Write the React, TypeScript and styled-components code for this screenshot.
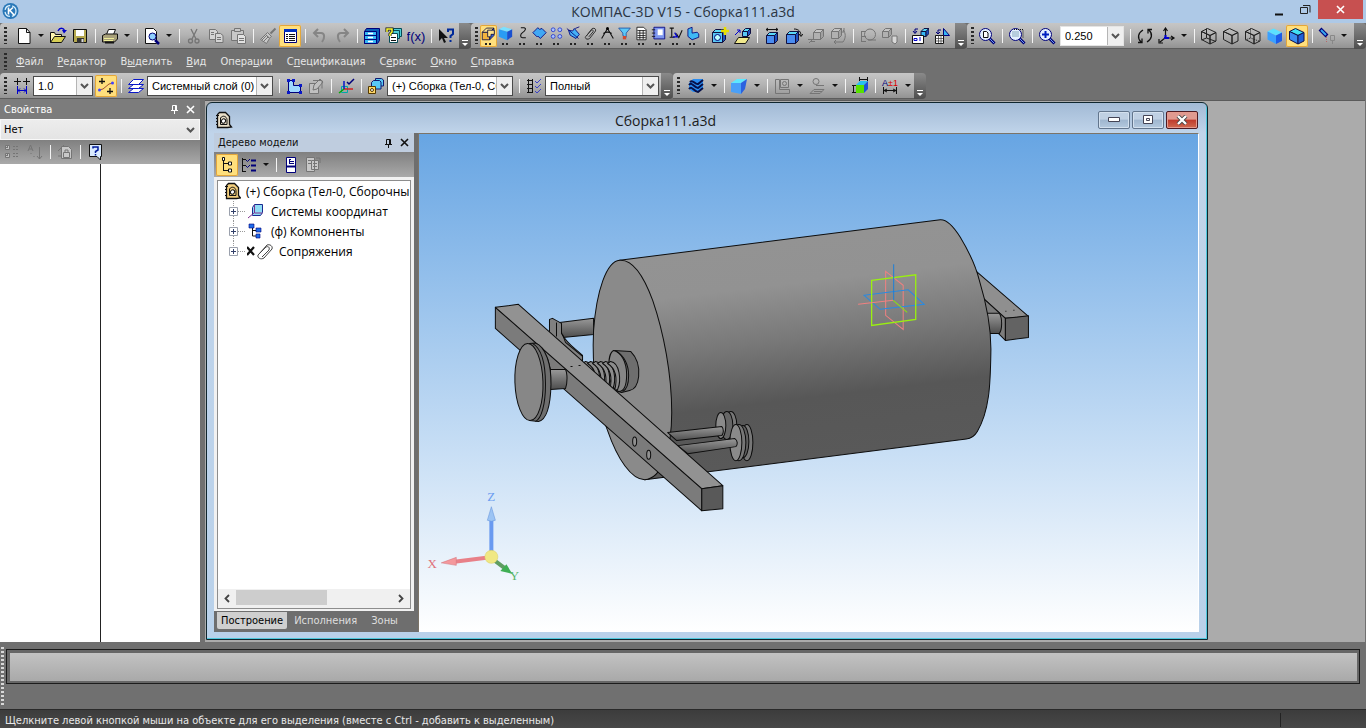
import React from 'react';
import styled, { createGlobalStyle, css } from 'styled-components';

const ui = `'DejaVu Sans Condensed', 'Noto Sans', sans-serif`;
const soft = `'Open Sans', 'Noto Sans', sans-serif`;
const field = `'Liberation Sans', 'Noto Sans', sans-serif`;

const Global = createGlobalStyle`
  * { box-sizing: border-box; }
  body { margin: 0; background: #707070; font-family: ${ui}; font-size: 11px; color: #000; }
  button { border: 0; padding: 0; margin: 0; background: none; font: inherit; color: inherit; }
  h1, h2 { margin: 0; font: inherit; }
`;

const App_ = styled.div`
  height: 100vh;
  display: flex;
  flex-direction: column;
  overflow: hidden;
`;

/* ---------- title bar ---------- */
const TitleBar = styled.header`
  height: 23px;
  flex: none;
  display: grid;
  grid-template-columns: 140px 1fr 140px;
  background: #aec9e7;
  color: #2b3542;
  font-family: ${soft};
  font-size: 14px;
  line-height: 23px;
  h1 { text-align: center; white-space: nowrap; }
  > svg { margin: 2px; }
`;
const WindowControls = styled.div`
  display: flex;
  justify-content: flex-end;
  align-items: flex-start;
  padding-right: 3px;
`;
const WinButton = styled.button<{ $close?: boolean }>`
  width: ${p => (p.$close ? 45 : 26)}px;
  height: 19px;
  display: grid;
  place-items: center;
  background: ${p => (p.$close ? '#c75050' : 'none')};
`;

/* ---------- toolbars ---------- */
const ToolRow = styled.div`
  display: flex;
  flex: none;
  height: 26px;
  background: #707070;
`;
const Bar = styled.div<{ $grow?: boolean }>`
  display: flex;
  align-items: center;
  flex: ${p => (p.$grow ? '1 0 auto' : 'none')};
  height: 26px;
  background: linear-gradient(#c6c6c6, #b4b4b4 45%, #939393);
  border-bottom: 1px solid #5c5c5c;
  border-top-left-radius: 4px;
`;
const Grip = styled.span<{ $w: number }>`
  width: ${p => p.$w}px;
  flex: none;
  height: 17px;
  display: flex;
  padding-left: 4px;
  &::before {
    content: '';
    width: 3px;
    background: repeating-linear-gradient(#2a2a2a 0 2px, transparent 2px 4px);
  }
`;
const Tool = styled.button<{ $on?: boolean; $w?: number }>`
  width: ${p => p.$w || 22}px;
  height: 22px;
  flex: none;
  display: grid;
  place-items: center;
  border-radius: 2px;
  ${p => p.$on && css`
    background: #ffdf7c;
    box-shadow: inset 0 0 0 1px #e3a63a;
  `}
`;
const Sep = styled.span`
  width: 8px;
  flex: none;
  height: 14px;
  display: flex;
  justify-content: center;
  &::before { content: ''; width: 1px; background: #f4f4f4; }
`;
const Caret = styled.button<{ $w: number }>`
  width: ${p => p.$w}px;
  height: 20px;
  flex: none;
  display: grid;
  place-items: center;
  &::before {
    content: '';
    border: 3px solid transparent;
    border-top-color: #111;
    border-bottom: 0;
  }
`;
const More = styled.button`
  width: 12px;
  flex: none;
  height: 26px;
  background: linear-gradient(#8a8a8a, #4e4e4e);
  display: grid;
  place-items: end center;
  padding-bottom: 2px;
  border-radius: 0 4px 4px 0;
`;
const Field = styled.span<{ $w: number; $flat?: boolean }>`
  width: ${p => p.$w}px;
  height: 20px;
  flex: none;
  display: grid;
  grid-template-columns: minmax(0, 1fr) 16px;
  background: #fff;
  border: 1px solid ${p => (p.$flat ? '#e4e4e4' : '#4a4a4a')};
  select {
    grid-area: 1 / 1 / 2 / 3;
    appearance: none;
    border: 0;
    outline: 0;
    background: none;
    min-width: 0;
    height: 18px;
    padding: 0 16px 0 4px;
    font: 11px ${field};
    color: #000;
  }
  > span {
    grid-area: 1 / 2;
    display: grid;
    place-items: center;
    background: #efefef;
    border-left: 1px solid #b5b5b5;
    pointer-events: none;
    z-index: 1;
  }
`;
const Gap = styled.span`
  width: 2px;
  flex: none;
`;
const MenuBar = styled.nav`
  display: flex;
  flex: none;
  height: 24px;
  align-items: center;
  background: #707070;
  color: #e6e6e6;
`;
const MenuItem = styled.button`
  padding: 0 7px;
  white-space: nowrap;
`;

/* ---------- workspace ---------- */
const Main = styled.main`
  flex: 1;
  min-height: 0;
  display: flex;
  background: #707070;
`;
const Properties = styled.aside`
  width: 200px;
  flex: none;
  display: flex;
  flex-direction: column;
  background: #fff;
`;
const PaneTitle = styled.div<{ $light?: boolean }>`
  height: ${p => (p.$light ? 19 : 20)}px;
  flex: none;
  display: flex;
  align-items: center;
  padding: 0 2px 0 4px;
  background: ${p => (p.$light ? '#bfcddf' : '#7c7c7c')};
  color: ${p => (p.$light ? '#111' : '#fff')};
  h2 { flex: 1; }
  button { width: 16px; height: 16px; display: grid; place-items: center; }
`;
const ObjectPicker = styled.label`
  display: grid;
  flex: none;
  height: 21px;
  background: linear-gradient(#ededed, #e4e4e4);
  border: 1px solid #f8f8f8;
  align-items: center;
  select {
    grid-area: 1 / 1;
    appearance: none;
    border: 0;
    background: none;
    font: 11px ${ui};
    padding: 0 3px;
    height: 19px;
  }
  svg { grid-area: 1 / 1; justify-self: end; margin-right: 4px; pointer-events: none; }
`;
const PaneTools = styled.div<{ $h: number }>`
  height: ${p => p.$h}px;
  flex: none;
  display: flex;
  align-items: center;
  background: linear-gradient(#808080, #a9a9a9);
`;
const PropertyGrid = styled.div`
  flex: 1;
  display: grid;
  grid-template-columns: 101px 1fr;
  div:first-child { border-right: 1px solid #222; }
  div { min-width: 0; }
`;
const Desktop = styled.section`
  flex: 1;
  min-width: 0;
  display: flex;
  margin: 1px 1px 0 5px;
  padding: 1px 157px 2px 1px;
  background: #ababab;
  border: solid #5a5a5a;
  border-width: 1px 0 0 0;
`;
const DocWindow = styled.article`
  flex: 1;
  min-width: 0;
  display: flex;
  flex-direction: column;
  padding: 0 8px 7px 7px;
  border: 1px solid #10262e;
  border-radius: 6px 6px 0 0;
  background: linear-gradient(#a2bad5, #c0d4ea 30px, #b9d1ea);
  box-shadow: inset -1px -1px 0 #4fc8dd;
`;
const DocTitle = styled.div`
  height: 30px;
  flex: none;
  display: grid;
  grid-template-columns: 100px 1fr 182px;
  align-items: center;
  padding: 4px 1px 0 1px;
  color: #1b1b1b;
  font-family: ${soft};
  font-size: 14px;
  h2 { text-align: center; }
`;
const DocButtons = styled.div`
  display: flex;
  justify-content: flex-end;
  gap: 2px;
`;
const DocButton = styled.button<{ $close?: boolean }>`
  width: 32px;
  height: 18px;
  flex: none;
  display: grid;
  place-items: center;
  border: 1px solid ${p => (p.$close ? '#4d1a22' : '#62758c')};
  border-radius: 2px;
  box-shadow: inset 0 0 0 1px ${p => (p.$close ? '#e49a8e' : '#d3e0ee')};
  background: ${p => (p.$close
    ? 'linear-gradient(#e09a90 45%, #bf3a2b 50%, #cf6a50)'
    : 'linear-gradient(#bfd0e3 45%, #9fb6cf 50%, #b4c9de)')};
`;
const DocBody = styled.div`
  flex: 1;
  min-height: 0;
  display: flex;
  background: #6e6e6e;
`;
const TreePane = styled.aside`
  width: 200px;
  flex: none;
  display: flex;
  flex-direction: column;
`;
const TreeFrame = styled.div`
  flex: 1;
  min-height: 0;
  display: flex;
  background: #f1f1f1;
  padding: 3px 3px 2px 3px;
`;
const TreeBox = styled.div`
  flex: 1;
  min-width: 0;
  display: flex;
  flex-direction: column;
  border: 1px solid #8d8d8d;
  background: #fff;
`;
const Tree = styled.ul`
  flex: 1;
  list-style: none;
  margin: 0;
  padding: 0;
  overflow: hidden;
  font-family: ${soft};
  font-size: 12px;
`;
const Node = styled.li<{ $gap: number }>`
  height: 20px;
  display: flex;
  align-items: center;
  white-space: nowrap;
  svg { flex: none; margin-right: ${p => p.$gap}px; }
`;
const HScroll = styled.div`
  height: 19px;
  flex: none;
  display: grid;
  grid-template-columns: 18px 91px 1fr 18px;
  background: #f0f0f0;
  button { display: grid; place-items: center; }
  span { background: #cdcdcd; margin: 1px 0 3px; }
  button:last-child { grid-column: 4; }
`;
const Tabs = styled.div`
  height: 21px;
  flex: none;
  display: flex;
  padding: 1px 3px 3px;
  color: #dedede;
`;
const Tab = styled.button<{ $on?: boolean }>`
  padding: 0 ${p => (p.$on ? 4 : 7)}px;
  ${p => p.$on && css`
    background: #cfcfcf;
    color: #000;
    border-radius: 0 0 2px 2px;
  `}
`;
const Viewport = styled.div`
  flex: 1;
  min-width: 0;
  margin-left: 4px;
  border: solid #7c7468;
  border-width: 1px 1px 0 1px;
  border-right-color: #fff;
  background: linear-gradient(#67a5e3, #fff);
  svg { display: block; width: 100%; height: 100%; }
`;

/* ---------- bottom ---------- */
const Dock = styled.section`
  height: 67px;
  flex: none;
  display: flex;
  gap: 2px;
  background: #707070;
  padding: 5px 6px 4px 1px;
  &::before {
    content: '';
    width: 3px;
    background: repeating-linear-gradient(#d8d8d8 0 2px, transparent 2px 4px);
  }
`;
const MessageBox = styled.div`
  flex: 1;
  height: 35px;
  margin-top: 2px;
  border: 1px solid #1c1c1c;
  padding: 3px 2px 2px 3px;
  background: #666;
  div { height: 100%; background: linear-gradient(#c2c2c2, #a9a9a9); }
`;
const Status = styled.footer`
  height: 19px;
  flex: none;
  display: flex;
  align-items: center;
  padding: 2px 5px 0;
  background: linear-gradient(#3c3c3c, #484848);
  border-top: 1px solid #2a2a2a;
  color: #e8e8e8;
  white-space: nowrap;
`;
const StatusMark = styled.span`
  margin-left: auto;
  width: 81px;
  height: 14px;
  border-left: 1px solid #222;
`;

/* ---------- icons ---------- */
const navy = '#00007a';
const dim = '#757575';

type CubeProps = { x: number; y: number; s: number; d?: number; f?: string; t?: string; r?: string; k?: string };
const Cube = ({ x, y, s, d = 4, f = '#4a8cf0', t = '#59d8f8', r = '#1e50c0', k = '#101040' }: CubeProps) => (
  <g stroke={k} strokeLinejoin="round">
    <path fill={f} d={`M${x} ${y}h${s}v${s}h${-s}z`} />
    <path fill={t} d={`M${x} ${y}l${d} ${-d}h${s}l${-d} ${d}z`} />
    <path fill={r} d={`M${x + s} ${y}l${d} ${-d}v${s}l${-d} ${d}z`} />
  </g>
);
type WireProps = { k: string; front?: string; right?: string; top?: string; hidden?: 'solid' | 'faint' };
const IsoBox = ({ k, front = 'none', right = 'none', top = 'none', hidden }: WireProps) => (
  <g stroke={k} strokeLinejoin="round">
    {hidden && (
      <path fill="none" strokeDasharray={hidden === 'faint' ? '1 1' : undefined} d="M6.500 1.500v9.500L1.500 13M6.500 11l9.500 3.500" />
    )}
    <path fill={top} d="M1.500 4.500l6-3 8.500 4-6 3z" />
    <path fill={front} d="M1.500 4.500l8.500 4v8.500l-8.500-4.500z" />
    <path fill={right} d="M10 8.500l6-3v8.500l-6 3z" />
  </g>
);
const Lens = ({ children }: { children?: React.ReactNode }) => (
  <>
    <path d="M11 11l5.500 5.500" stroke={navy} strokeWidth="3" />
    <path d="M12 12l4 4" stroke="#6fa0f0" />
    <circle cx="7.500" cy="7.500" r="6" fill="#e4f0ff" stroke={navy} />
    {children}
  </>
);
const Reel = ({ fill }: { fill: string }) => (
  <>
    <path d="M2.500 15.500v-12l2-2h6l4 4v8l2 2.500-4 .5h-10z" fill={fill} stroke="#111" strokeWidth="1.300" />
    <path d="M1 4.500h3M1 7.500h2M1 10.500h2M1 13.500h2" stroke="#111" />
    <path d="M5.500 13.500V7c2-3 6-2 6.500 1.500v5z" fill="none" stroke="#111" />
    <ellipse cx="8.500" cy="10" rx="2" ry="2.300" fill="#fff" stroke="#111" transform="rotate(30 8.500 10)" />
  </>
);

const pics: Record<string, React.ReactNode> = {
  new: <><path d="M3.500 1.500h8l3.500 4v11H3.500z" fill="#fff" stroke="#111" /><path d="M11.500 1.500v4H15" fill="none" stroke="#111" /></>,
  open: <><path d="M1.500 15.500v-10h4l1 2h6v3" fill="#fff6b0" stroke="#111" /><path d="M1.500 15.500l4-6h11l-4 6z" fill="#d8cf55" stroke="#111" /><path d="M9 4c2-4 6-3 6.500 0" fill="none" stroke="#00c" strokeWidth="1.500" /><path d="M13 3h5l-3 3.500z" fill="#00c" /></>,
  save: <><path d="M2.500 2.500h13v13h-12l-1-1z" fill="#b5a84e" stroke="#111" /><path d="M5 3h8v6H5z" fill="#fff" /><path d="M6 11h7v5H6z" fill="#333" /><path d="M10.500 12h2v3h-2z" fill="#ddd" /></>,
  print: <><path d="M5.500 7.500l2-5h7l-2 5" fill="#fff" stroke="#111" /><path d="M1.500 8.500l3-1.500h12v5l-3 3h-12z" fill="#a8a07a" stroke="#111" /><path d="M3 11.500h10M3 13.500h9" stroke="#ee9" /><path d="M4 15.500h9" stroke="#111" strokeWidth="2" /></>,
  preview: <><path d="M2.500 1.500h8l3 3v12h-11z" fill="#fff" stroke="#111" /><path d="M12 13l4 4" stroke={navy} strokeWidth="2.500" /><circle cx="9.500" cy="9.500" r="3.500" fill="#8fd0ff" stroke={navy} /></>,
  cut: <g fill="none" stroke={dim} strokeWidth="1.300"><path d="M6 2l5 10M12 2L7 12" /><circle cx="5.500" cy="14" r="2" /><circle cx="12" cy="14" r="2" /></g>,
  copy: <g fill="#d4d4d4" stroke={dim}><path d="M2.500 2.500h6l2 2v8h-8z" /><path d="M8.500 6.500h5l2.500 2v7H8.500z" /><path d="M4 5.500h3M4 7.500h3M10 10.500h4M10 12.500h4" /></g>,
  paste: <g fill="#c8c8c8" stroke={dim}><path d="M2.500 3.500h12v10h-12z" /><path d="M5.500 1.500h6v3h-6z" /><path d="M8.500 7.500h6l2 2v7h-8z" fill="#e2e2e2" /><path d="M10 11.500h5M10 13.500h5" /></g>,
  brush: <g stroke={dim} fill="#c9c9c9"><path d="M16.500 1.500l-5 5" strokeWidth="2" /><path d="M8.500 5.500l4 4-2 1.500-4-3.500z" /><path d="M6.500 7.500l4 4-3 5-6-4z" /><path d="M3 13l4-4M5 14l4-4" /></g>,
  list: <><path d="M3.500 2.500h12v13h-12z" fill="#fff" stroke={navy} /><path d="M3 3.500h13" stroke="#0030c0" strokeWidth="3" /><path d="M5 7.500h2M5 9.500h2M5 11.500h2M5 13.500h2M8 7.500h6M8 9.500h6M8 11.500h6M8 13.500h6" stroke="#111" /></>,
  undo: <path d="M4 6h6c4 0 4 5 1 9M7 2L3 6l4 4" fill="none" stroke="#858585" strokeWidth="2" />,
  redo: <path d="M14 6H8c-4 0-4 5-1 9M11 2l4 4-4 4" fill="none" stroke="#858585" strokeWidth="2" />,
  cabinet: <g stroke={navy} fill="#35b8f4"><path d="M1.500 4.500l2-3h13v12l-2 3h-13z" fill="#0a60b8" /><path d="M1.500 4.500h12v4h-12zM1.500 8.500h12v4h-12zM1.500 12.500h12v4h-12z" /><path d="M5 6.500h5M5 10.500h5M5 14.500h5" stroke="#fff" strokeWidth="1.500" /></g>,
  layersq: <><g fill="#4fd0d8" stroke="#054a55"><path d="M8.500 1.500h8v8h-8z" /><path d="M6.500 3.500h8v8h-8z" /><path d="M4.500 6.500h8v9h-8z" fill="#fff" /></g><path d="M2 5V2h5v3L5 7v2" fill="none" stroke="#111" strokeWidth="3" /><path d="M2 5V2h5v3L5 7v2" fill="none" stroke="#ff3" strokeWidth="1.500" /><path d="M6 10.500h5M6 13.500h5" stroke="#111" /></>,
  fx: <text x="9" y="14" textAnchor="middle" fontFamily="Liberation Sans, sans-serif" fontSize="13" fill={navy}>f(x)</text>,
  help: <><path d="M2 2v12l3-3 2 5 2-1-2-4h4z" fill="#111" /><path d="M11 5V2.500h5V7l-2.500 2v2M13.500 13v2" fill="none" stroke="#002a9a" strokeWidth="2" /></>,
  asm: <><Cube x={1.5} y={7.5} s={9} d={5} f="#f3b23c" t="#fbe08a" r="#3a66d8" /><path d="M8 5h8v5h-4v3H8z" fill="#fbe08a" stroke="#101040" /></>,
  solid: <g><path d="M1 4l6-3 10 3-6 3z" fill="#7be0ff" /><path d="M1 4l10 3v10L1 13z" fill="#2a9cf4" /><path d="M11 7l6-3v9l-6 4z" fill="#1a50d0" /></g>,
  curve: <path d="M7 2h4c3 1 1 4-2 6s-3 6 0 6h4" fill="none" stroke="#111" strokeWidth="1.300" />,
  surf: <path d="M1 8l6-6 2 2 3-1 5 5-7 7-3-3-1 1z" fill="#41a8f4" stroke={navy} />,
  grid4: <g fill="#a9c4ff" stroke="#2536c8"><circle cx="5" cy="4.500" r="2.300" /><circle cx="13" cy="4.500" r="2.300" /><circle cx="5" cy="12.500" r="2.300" /><circle cx="13" cy="12.500" r="2.300" /></g>,
  array: <><path d="M3 5l5 1 2-3 6 7-4 5-7-4z" fill="#45b0f5" stroke={navy} /><path d="M1 3l14 12M11 3l5-2" stroke={navy} /></>,
  clip: <path d="M4 12l7-9c3-1 5 1 4 3l-7 9c-3 2-6 0-5-2l7-8c1-1 3 0 2 2l-5 6" fill="none" stroke="#333" strokeWidth="1.200" />,
  compass: <><path d="M9 3L2 15M9 3l7 12M4 9c3-2 7-2 10 0" fill="none" stroke="#111" strokeWidth="1.300" /><circle cx="9" cy="3" r="1.800" /></>,
  filter: <><path d="M2 2.500h14l-5 6v5l-4-2v-3z" fill="#5cc8f8" stroke="#2050a0" /><path d="M7 12h4v4H7z" fill="#d04a30" /></>,
  doc: <><path d="M3.500 1.500h8l3 3v12h-11z" fill="#fff" stroke="#111" /><path d="M4 5.500h10M4 8.500h10M4 11.500h10M4 14h10M7 5v11M11 5v11" stroke="#111" /></>,
  book: <><path d="M3.500 1.500h13v14h-13z" fill="#7d96f0" stroke={navy} /><path d="M8 4h6v7H8z" fill="#fff" /><path d="M1 4.500h4M1 8.500h4M1 12.500h4" stroke="#111" /></>,
  rough: <><path d="M2 2.500h5M4.500 3v10M2 13.500h6M10 9l3 5 4-9" fill="none" stroke="#111" strokeWidth="1.300" /><path d="M8 8l3 5M6 13h6" stroke="#00c" strokeWidth="1.500" /></>,
  pipe: <path d="M3.500 3.500l5-2v7l6-1 2 2v4l-8 3-5-4z" fill="#3fb8f4" stroke={navy} />,
  add: <><Cube x={1.5} y={5.5} s={10} d={3} f="#59c8f6" /><circle cx="6.500" cy="10.500" r="3" fill="#bff" stroke={navy} /><path d="M14 0v8M10 4h8" stroke="#e8e000" strokeWidth="2.500" /></>,
  fromfile: <><Cube x={9.5} y={4.5} s={5} d={3} f="#59c8f6" /><path d="M1.500 16.500l4-6h11l-4 6z" fill="#f0e88c" stroke="#111" /><path d="M2 8l5-5M4 3h3v3" stroke="#00c" fill="none" /></>,
  width: <><path d="M3 2.500h12M5 1L3 2.500 5 4M13 1l2 1.500L13 4" stroke="#111" fill="none" /><Cube x={3.5} y={8.5} s={8} d={3} /></>,
  rotate: <><Cube x={1.5} y={7.500} s={9} d={3} /><path d="M9 2c5 0 7 3 7 7M14 7l2 2.500L18 7" fill="none" stroke="#111" /></>,
  fixd: <><Cube x={6.5} y={5.5} s={7} d={3} f="#b0b0b0" t="#c4c4c4" r="#a0a0a0" k={dim} /><path d="M6 12l-4 4M1 12.500h8M3 14.500h5" stroke={dim} /></>,
  turnd: <><Cube x={2.5} y={4.5} s={7} d={3} f="#b0b0b0" t="#c4c4c4" r="#a0a0a0" k={dim} /><path d="M14 3c3 3 3 8 0 12H5M15 1v4h-3M7 13l-2 2 2 2" fill="none" stroke={dim} /></>,
  mated: <g fill="none" stroke={dim}><path d="M2 4.500h5M2 9.500h5M2 14.500h5M2.500 4v11" /><circle cx="11" cy="7.500" r="5.500" /><path d="M9 13h8" /></g>,
  cubesd: <><Cube x={1.500} y={4.500} s={6} d={3} f="#b0b0b0" t="#c4c4c4" r="#a0a0a0" k={dim} /><path d="M11 9h5v6l-2 2-3-2z" fill="#d8d8d8" stroke={dim} /></>,
  todraw: <><Cube x={10} y={4.500} s={5} d={3} f="#35b8f4" /><path d="M1.500 8.500h11v8h-11z" fill="#fff" stroke="#111" /><path d="M3 11.500h3v2H3zM9 10v4" fill="none" stroke="#00c" /><path d="M7 2H4v4M2 4l2 2.500L6 4" fill="none" stroke={navy} /></>,
  totable: <><path d="M10.500 8.500v-7l6 7z" fill="#35b8f4" stroke={navy} /><path d="M2.500 8.500h8v8h-8z" fill="#fff" stroke="#111" /><path d="M5.500 8v8M8 8v8M2 11.500h8M2 14h8" stroke="#333" strokeWidth=".7" /><path d="M8 3H5v4M3 5l2 2L7 5" fill="none" stroke={navy} /></>,
  zoompage: <Lens><path d="M5.500 4.500h3l1.500 1.500v4.500H5.500z" fill="#fff" stroke="#111" /></Lens>,
  zoomarea: <Lens><path d="M6 2.500h9v9" fill="none" stroke="#111" strokeDasharray="1 1" /><path d="M4 5h7M4 7h7M4 9h7" stroke="#8ab" /></Lens>,
  zoomin: <Lens><path d="M7.500 4v7M4 7.500h7" stroke="#0020c0" strokeWidth="2" /></Lens>,
  spin: <path d="M5 15C1 11 2 6 7 3M13 3c4 4 3 9-2 12M2 15.500h4v-4M16 2.500h-4v4" fill="none" stroke="#111" strokeWidth="1.300" />,
  axes: <g fill="none" strokeWidth="1.200"><path d="M7.500 2v9M5.500 4l2-3 2 3M7 11l-5 4M1 12v4h4" stroke="#111" /><path d="M8 11h8M13 9l3 2-3 2" stroke="#111" /><path d="M6 11h5M7.500 8v4" stroke="#00c" strokeWidth="2" /></g>,
  wire: <IsoBox k="#222" hidden="solid" />,
  box: <IsoBox k="#222" />,
  boxhid: <IsoBox k="#222" hidden="faint" />,
  shade: <IsoBox k="none" front="#3aa0ff" top="#5ce0ff" right="#1c5ce8" />,
  shadeline: <IsoBox k="#10104a" front="#3a8cf0" top="#40e0f4" right="#2060d8" />,
  lamp: <><path d="M2 2l7 7" stroke={navy} strokeWidth="4" /><path d="M3 3l5 5" stroke="#38a8f0" strokeWidth="2" /><path d="M8.500 10v6" stroke="#b66" strokeDasharray="1 1" /><path d="M12.500 8.500h4v5h-4zM14.500 14v3" fill="none" stroke="#888" /></>,
  dist: <><path d="M4.500 1v7M1 4.500h7M13.500 1v7M10 4.500h7" stroke="#111" /><path d="M4.500 9v8M13.500 9v8M5 13.500h8M7 11.500l-2 2 2 2M11 11.500l2 2-2 2" fill="none" stroke="#00c" /></>,
  snap: <><path d="M5 1v6M2 4.500h6M13 11v6M10 14.500h6" stroke="#111" strokeWidth="1.300" /><path d="M2 13l4-1 6-5 4-1" fill="none" stroke="#a05030" /><circle cx="2.500" cy="13" r="1.500" fill="#44f" /><circle cx="15.500" cy="6" r="1.500" fill="#44f" /></>,
  layers: <g fill="#fff" stroke="#0a18c8"><path d="M1.500 15.500l5-4h10l-5 4z" /><path d="M1.500 11.500l5-4h10l-5 4z" /><path d="M1.500 7.500l5-5h10l-5 5z" /></g>,
  sketch: <><path d="M3.500 3.500h5v5h7v7h-12z" fill="#9fd8ff" stroke={navy} /><g fill="#0a18c8"><path d="M2 2h3v3H2zM7 2h3v3H7zM14 7h3v3h-3zM14 14h3v3h-3zM2 14h3v3H2z" /></g></>,
  sketchd: <g fill="#c0c0c0" stroke={dim}><path d="M2.500 6.500h9v10h-9z" /><path d="M6 13l1-5 6-6 3 3-6 7z" /><path d="M6 3.500h9v8" fill="none" /></g>,
  ucs: <><path d="M4.500 9.500h6v6h-6z" fill="none" stroke="#00a8a8" /><path d="M7 12h9" stroke="#d02020" strokeWidth="1.500" /><path d="M7 12V4" stroke="#0a18c8" strokeWidth="1.500" /><path d="M7 12l-5 4" stroke="#0a0" strokeWidth="1.500" /><path d="M10 5l2 2 5-5" fill="none" stroke={navy} strokeWidth="1.500" /></>,
  comps: <><path d="M8.500 1.500h6l2 1.500v6h-8z" fill="#59c8f6" stroke="#101a70" /><path d="M4.500 5.500l2-2h6l1.500 1.500v7h-9.500z" fill="#59c8f6" stroke="#101a70" /><path d="M1.500 9.500h7v7h-7z" fill="#ffd768" stroke="#553a00" /><circle cx="5" cy="13" r="1.500" fill="#fff" stroke="#553a00" /></>,
  checks: <><path d="M3.500 2v14M7.500 2v14M2 3.500h6M2 7.500h6M2 11.500h6M2 15.500h6" stroke="#111" /><path d="M10 4l2 2 4-4M10 9l2 2 4-4M10 14l2 2 4-4" fill="none" stroke="#3a40c8" /></>,
  section: <><path d="M2 6l4-4h10v9l-4 4H6l-4-3z" fill="#2a8cf0" /><path d="M2 12c3-4 5 3 9 3l5-4M2 8c3-4 5 3 9 3l5-4M3 5c3-3 5 3 8 2l5-4" stroke="#071048" strokeWidth="2" fill="none" /></>,
  prism: <g><path d="M1 6l6-4h10l-6 4z" fill="#5ee8ff" /><path d="M1 6h10v11L1 15z" fill="#4aa0f8" /><path d="M11 6l6-4-2 10-4 5z" fill="#2a62e0" /></g>,
  refd: <g fill="none" stroke={dim}><path d="M2.500 2.500h4v10h10v4h-14z" /><path d="M7.500 2.500h8v8h-8z" /><circle cx="11.500" cy="6.500" r="2" /></g>,
  proj: <g fill="none" stroke={dim}><circle cx="8" cy="4.500" r="3" /><path d="M8 8.500h8M2 16.500l4-4h10l-4 4zM6 14.500h8" /></g>,
  measure: <><Cube x={5} y={8} s={8} d={4} f="#58e000" t="#28c0f0" r="#1c50d8" k="none" /><path d="M1 8.500h4M1 15.500h4M2.500 8v8M8.500 0v4M16.500 0v4M8 2.500h8" stroke="#111" /></>,
  tol: <><text x="1" y="9" fontFamily="Liberation Sans, sans-serif" fontSize="9" fill={navy}>A</text><text x="7" y="9" fontFamily="Liberation Sans, sans-serif" fontSize="9" fill="#d00">±1</text><path d="M2.500 10v7M15.500 10v7M3 13.500h12M6 12l-3 1.500L6 15M12 12l3 1.500-3 1.500" fill="none" stroke="#111" /></>,
  groupd: <g stroke={dim} fill="#c4c4c4"><path d="M1.500 2.500h4v4h-4zM1.500 10.500h4v4h-4z" /><path d="M3.500 3v3M2 4.500h3M3.500 11v3M2 12.500h3M9 3.500h6M9 6.500h6M9 10.500h6M9 13.500h6" strokeDasharray="2 1" /></g>,
  sortd: <g stroke={dim} fill="none"><path d="M2 8l2.500-6L7 8M3 6h3M5 10v1M8 13v1M13.500 4v12M11 13l2.500 3 2.500-3" /></g>,
  lockd: <g stroke={dim} fill="#c8c8c8"><path d="M5.500 3.500h7l3 3v9h-10z" /><path d="M2 8l6-6M2 13h3M7.500 9.500h6v5h-6zM9 9V7h3v2" /></g>,
  hint: <><path d="M3.500 1.500h12v12h-1v3.500l-3.500-3.500H3.500z" fill="#d9eaff" stroke="#111" /><path d="M7 5.500V4h5v3L9.500 8.500V10M9.500 11v1.500" fill="none" stroke="#001a9a" strokeWidth="1.500" /></>,
  treeon: <g fill="none" stroke="#111"><path d="M5.500 4v11M5.500 7.500h5M5.500 14.500h5" /><path d="M4.500 1.500h2v3h-2zM10.500 6h3v3h-3zM10.500 13h3v3h-3z" fill="#fff" /></g>,
  treelist: <><path d="M2.500 2v14M2 3.500h4M2 9.500h4M2 15.500h4" stroke="#111" /><path d="M6 4l1.500 1.500L10 3M6 10l1.500 1.500L10 9" fill="none" stroke={navy} /><path d="M11 4.500h5M11 9.500h5M11 14.500h5" stroke={navy} strokeWidth="2" /></>,
  treedoc: <><path d="M4.500 1.500h9v15h-9z" fill="#fff" stroke={navy} /><path d="M5 10.500h8" stroke={navy} strokeWidth="2" /><path d="M7 3.500h2M7.500 4v4M8 5.500h4M8 7.500h4" stroke={navy} /></>,
  treedocd: <g stroke={dim} fill="#c8c8c8"><path d="M2.500 1.500h8v14h-8zM7.500 4.500h7v9h-7z" /><path d="M4 4.500h3M4 7.500h3M9 7.500h4M9 10.500h4M12 2h4v5" fill="none" /></g>,
  docicon: <Reel fill="#e9dfc8" />,
};

const Pic = ({ n }: { n: string }) => (
  <svg width="18" height="18" viewBox="0 0 18 18" aria-hidden="true">{pics[n]}</svg>
);
const Chevron = () => (
  <svg width="9" height="6" viewBox="0 0 9 6" aria-hidden="true"><path d="M1 1l3.500 3.500L8 1" fill="none" stroke="#555" strokeWidth="2" /></svg>
);
const Dots = ({ n }: { n: string }) => (
  <svg width="17" height="22" viewBox="0 0 17 22" aria-hidden="true">
    <svg x="1" y="1" width="15" height="15" viewBox="0 0 18 18">{pics[n]}</svg>
    <path d="M5 18h2v2H5zM9 18h2v2H9z" fill="#222" />
  </svg>
);
const Overflow = () => (
  <More aria-label="Параметры панели">
    <svg width="8" height="8" viewBox="0 0 8 8"><path d="M1 1.500h6" stroke="#fff" /><path d="M1 4h6L4 7z" fill="#fff" /></svg>
  </More>
);
const Combo = ({ w, value, label, flat }: { w: number; value: string; label: string; flat?: boolean }) => (
  <Field $w={w} $flat={flat}>
    <select aria-label={label}><option>{value}</option></select>
    <span><Chevron /></span>
  </Field>
);

/* "|" is a separator, "v" a drop-down arrow, "*" marks a pressed tool */
const Tools = ({ items, caret = 12 }: { items: string; caret?: number }) => (
  <>
    {items.split(' ').map((it, i) => {
      if (it === '|') return <Sep key={i} />;
      if (it === 'v') return <Caret key={i} $w={caret} aria-label="Ещё" />;
      const on = it.endsWith('*');
      const name = on ? it.slice(0, -1) : it;
      return <Tool key={i} $on={on} aria-label={name}><Pic n={name} /></Tool>;
    })}
  </>
);

const menus: [string, string, string][] = [
  ['', 'Ф', 'айл'], ['', 'Р', 'едактор'], ['В', 'ы', 'делить'], ['', 'В', 'ид'], ['Опера', 'ц', 'ии'],
  ['С', 'п', 'ецификация'], ['С', 'е', 'рвис'], ['', 'О', 'кно'], ['', 'С', 'правка'],
];

const Pin = ({ c }: { c: string }) => (
  <svg width="9" height="10" viewBox="0 0 9 10" aria-hidden="true"><path d="M2.500 6V1.500h4V6M1 6.500h7M4.500 7v3M5.500 1v5" fill="none" stroke={c} /></svg>
);
const Cross = ({ c }: { c: string }) => (
  <svg width="9" height="9" viewBox="0 0 9 9" aria-hidden="true"><path d="M1 1l7 7M8 1L1 8" stroke={c} strokeWidth="1.600" /></svg>
);

/* expander with its dotted connectors */
const Branch = ({ last }: { last?: boolean }) => (
  <svg width="29" height="20" viewBox="-1 0 29 20" aria-hidden="true">
    <path d={last ? 'M14.500 0v6' : 'M14.500 0v6M14.500 15v5'} stroke="#999" strokeDasharray="1 1" />
    <path d="M19 10.500h8" stroke="#999" strokeDasharray="1 1" />
    <path d="M10.500 6.500h8v8h-8z" fill="#fff" stroke="#9aa0ac" />
    <path d="M12 10.500h5M14.500 8v5" stroke="#33406a" />
  </svg>
);

const springs = [589, 594, 599, 604, 609, 614];

const Model = () => (
  <svg viewBox="420 134 777 497" preserveAspectRatio="xMidYMid meet" role="img" aria-label="Сборка111">
    <defs>
      <linearGradient id="drum" gradientUnits="userSpaceOnUse" x1="780" y1="240" x2="806" y2="460">
        <stop offset="0" stopColor="#939393" /><stop offset=".2" stopColor="#929292" /><stop offset=".45" stopColor="#787878" />
        <stop offset=".72" stopColor="#575757" /><stop offset="1" stopColor="#595959" />
      </linearGradient>
      <linearGradient id="rod" x1="0" y1="0" x2="0" y2="1">
        <stop offset="0" stopColor="#999" /><stop offset="1" stopColor="#4d4d4d" />
      </linearGradient>
    </defs>
    <g stroke="#0c0c0c" strokeLinejoin="round">
      <path d="M976 271L1028 316L1005 318L983 298z" fill="#8f8f8f" />
      <path d="M983 298L1005 318V340L999 334L985 320z" fill="#7d7d7d" />
      <path d="M986 313h13c3 5 3 16 0 20h-13z" fill="url(#rod)" />
      <path d="M1005 318L1028 315.500V337L1005 340z" fill="#636363" />
      <path d="M560 322L594 318V334L563 337z" fill="url(#rod)" />
      <path d="M620 260L940 219.500C948 219 955 229 960 237C969 252 975 264 979 280C986 303 991 330 990.500 352C990 385 989 410 977 431C974 436 971 438 966 438.500L645 479z" fill="url(#drum)" />
      <path d="M620 260C632 259 643 273 653 300C664 332 672 374 672 412C672 450 662 478 645 479C632 479 618 459 608 430C598 405 592 372 594 330C597 290 607 261 620 260z" fill="#8a8a8a" />
      <ellipse cx="731" cy="425" rx="6" ry="14" fill="#777" />
      <ellipse cx="727" cy="425" rx="6" ry="14" fill="#666" />
      <ellipse cx="721" cy="425" rx="5" ry="13" fill="#8a8a8a" />
      <path d="M668 432L722 426C724 428 724 433 722 435L677 440z" fill="url(#rod)" />
      <ellipse cx="747" cy="442" rx="6" ry="18" fill="#777" />
      <ellipse cx="743" cy="441" rx="6" ry="16" fill="#606060" />
      <ellipse cx="739" cy="442" rx="7" ry="18" fill="#777" />
      <ellipse cx="736" cy="442" rx="6" ry="18" fill="#8a8a8a" />
      <path d="M678 445L735 438C738 440 738 444 736 446L688 453z" fill="url(#rod)" />
      <path d="M614 350L631 351C637 357 640 366 639 376C638 385 635 389 630 390L622 392C616 391 614 388 614 384z" fill="#6e6e6e" />
      <path d="M614 350C622 352 627 362 627 374C627 385 624 391 619 391C613 388 609 380 609 370C609 358 610 352 614 350z" fill="#858585" />
      <path d="M617 351C624 355 629 364 629 375C629 384 627 389 623 391" fill="none" />
      {springs.map(x => (
        <path key={x} d={`M${x - 3} 361C${x + 6} 362 ${x + 8} 380 ${x + 4} 389L${x + 1} 390C${x + 4} 378 ${x + 2} 368 ${x - 6} 363z`} fill="#8c8c8c" />
      ))}
      <path d="M550 319L553 318L562 323V333C568 344 576 348 583 355V360L576 359L550 335z" fill="#808080" />
      <path d="M557 322V336M563 334L566 342L583 356" fill="none" />
      <path d="M496 307V328L702 510V488z" fill="#7b7b7b" />
      <path d="M496 307L519 304L723 485L702 488z" fill="#929292" />
      <path d="M702 488L723 485V508L702 510z" fill="#595959" />
      <path d="M551 369L566 369C568 373 568 383 566 388L551 389z" fill="url(#rod)" />
      <path d="M544 355L548 358L551 369" fill="none" />
      <path d="M530 343L536 342.500C546 346 552 364 551.500 384C551 406 547 419 539 421L530 420z" fill="#6f6f6f" />
      <path d="M533 343C542 348 546 364 546 384C546 404 542 418 536 421" fill="none" />
      <ellipse cx="529.500" cy="381.500" rx="14" ry="38.500" fill="#878787" transform="rotate(-2 529.500 381.500)" />
      <ellipse cx="635" cy="441" rx="2" ry="4.500" fill="#909090" />
      <ellipse cx="649" cy="454" rx="2" ry="4.500" fill="#909090" />
    </g>
    <path d="M571 366h2M579 365h2M1005 311h1M1013 310h1" stroke="#111" />
    <g fill="none">
      <path d="M885.500 271L903 285V329L885.500 315z" stroke="#f08080" />
      <path d="M864 295L908 289.500L924 304L880 309z" stroke="#2a8ae0" />
      <path d="M871.500 280L915.500 274.500V319L871.500 325z" stroke="#9af010" strokeWidth="1.300" />
      <path d="M893.500 264v36" stroke="#1e7fd8" />
      <path d="M858 304l35-4" stroke="#f08080" />
      <path d="M893 300l14 12" stroke="#8de010" />
    </g>
    <path d="M492 552V519" stroke="#6a9af0" strokeWidth="4" />
    <path d="M492 506L496 519.500Q492 521.500 488 519.500z" fill="#9cc4f4" stroke="#5f8fd8" strokeWidth=".5" />
    <path d="M487 557L455 561" stroke="#e88088" strokeWidth="4" />
    <path d="M442 562L457 556.500V564.500z" fill="#f4989c" stroke="#d07078" strokeWidth=".5" />
    <path d="M493 558L505 567" stroke="#5f9d62" strokeWidth="4" />
    <path d="M513 573L501 570L507 563.500z" fill="#3fae54" />
    <circle cx="492" cy="556" r="6.500" fill="#f0e884" stroke="#d8cc60" strokeWidth=".5" />
    <g fontFamily="Liberation Serif, serif" fontSize="13" textAnchor="middle">
      <text x="492" y="500" fill="#6a9cf0">Z</text>
      <text x="433" y="567" fill="#e0707a">X</text>
      <text x="515" y="579" fill="#58b468">Y</text>
    </g>
  </svg>
);

const App = () => (
  <App_>
    <Global />
    <TitleBar>
      <svg width="17" height="18" viewBox="0 0 17 18" aria-hidden="true">
        <circle cx="8.500" cy="9" r="8" fill="#2a78b8" />
        <circle cx="8.500" cy="9" r="5.500" fill="none" stroke="#d8eefc" strokeWidth="1.300" strokeDasharray="7 2" />
        <path d="M6.500 5.500v7M7 9l4-3.500M8 8.500l4 4.500" stroke="#fff" strokeWidth="1.600" />
      </svg>
      <h1>КОМПАС-3D V15 - Сборка111.a3d</h1>
      <WindowControls>
        <WinButton aria-label="Свернуть"><svg width="8" height="12"><path d="M0 10.500h8" stroke="#111" strokeWidth="2" /></svg></WinButton>
        <WinButton aria-label="Восстановить"><svg width="11" height="11"><path d="M.5 3.500h7v6h-7zM3 1.500h7v7" fill="none" stroke="#222" /></svg></WinButton>
        <WinButton $close aria-label="Закрыть"><Cross c="#fff" /></WinButton>
      </WindowControls>
    </TitleBar>

    <ToolRow>
      <Bar>
        <Grip $w={13} />
        <Tools items="new v open save | print v | preview v | cut copy paste | brush list* | undo redo | cabinet layersq fx | help" />
        <Gap />
      </Bar>
      <Overflow />
      <Bar>
        <Grip $w={9} />
        {'asm* solid curve surf grid4 array clip compass filter doc book rough pipe'.split(' ').map(n => (
          <Tool key={n} $w={17} $on={n.endsWith('*')} aria-label={n}><Dots n={n.replace('*', '')} /></Tool>
        ))}
        <Tools items="| add fromfile | width rotate fixd turnd | mated cubesd | todraw totable" />
        <Gap />
      </Bar>
      <Overflow />
      <Bar $grow>
        <Grip $w={9} />
        <Tools items="zoompage | zoomarea | zoomin" />
        <Gap />
        <Combo w={64} value="0.250" label="Масштаб" flat />
        <Gap />
        <Tools items="| spin axes v | wire box boxhid shade shadeline* | lamp v" />
      </Bar>
      <Overflow />
    </ToolRow>

    <MenuBar>
      <Grip $w={9} />
      {menus.map(([a, u, b]) => <MenuItem key={u + b}>{a}<u>{u}</u>{b}</MenuItem>)}
    </MenuBar>

    <ToolRow>
      <Bar>
        <Grip $w={11} />
        <Tools items="dist" />
        <Combo w={60} value="1.0" label="Шаг курсора" />
        <Gap />
        <Tools items="snap* | layers" />
        <Combo w={126} value="Системный слой (0)" label="Слой" />
        <Gap />
        <Tools items="| sketch sketchd | ucs | comps" />
        <Combo w={126} value="(+) Сборка (Тел-0, Сборочных единиц-0)" label="Текущий объект" />
        <Gap />
        <Tools items="| checks" />
        <Combo w={114} value="Полный" label="Тип загрузки" />
        <Gap />
      </Bar>
      <Overflow />
      <Bar>
        <Grip $w={12} />
        <Tools caret={13} items="section v | prism v | refd v proj v | measure | tol v" />
      </Bar>
      <Overflow />
    </ToolRow>

    <Main>
      <Properties>
        <PaneTitle>
          <h2>Свойства</h2>
          <button aria-label="Закрепить"><Pin c="#fff" /></button>
          <button aria-label="Закрыть"><Cross c="#fff" /></button>
        </PaneTitle>
        <ObjectPicker>
          <select aria-label="Объект"><option>Нет</option></select>
          <Chevron />
        </ObjectPicker>
        <PaneTools $h={24}>
          <Gap />
          <Tools items="groupd sortd | lockd | hint" />
        </PaneTools>
        <PropertyGrid><div /><div /></PropertyGrid>
      </Properties>

      <Desktop>
        <DocWindow>
          <DocTitle>
            <Pic n="docicon" />
            <h2>Сборка111.a3d</h2>
            <DocButtons>
              <DocButton aria-label="Свернуть"><svg width="12" height="6"><path d="M.5.500h11v4H.5z" fill="#fff" stroke="#445" /></svg></DocButton>
              <DocButton aria-label="Развернуть"><svg width="12" height="10"><path d="M1.500.500h9v8h-9zM4.500 3.500h3v2h-3z" fill="#fff" stroke="#445" /></svg></DocButton>
              <DocButton $close aria-label="Закрыть"><svg width="12" height="10"><path d="M2 1l8 8M10 1L2 9" stroke="#444" strokeWidth="4" /><path d="M2 1l8 8M10 1L2 9" stroke="#fff" strokeWidth="2.400" /></svg></DocButton>
            </DocButtons>
          </DocTitle>
          <DocBody>
            <TreePane>
              <PaneTitle $light>
                <h2>Дерево модели</h2>
                <button aria-label="Закрепить"><Pin c="#111" /></button>
                <button aria-label="Закрыть"><Cross c="#111" /></button>
              </PaneTitle>
              <PaneTools $h={25}>
                <Gap />
                <Tools items="treeon* treelist v | treedoc treedocd" />
              </PaneTools>
              <TreeFrame>
                <TreeBox>
                  <Tree>
                    <Node $gap={5}>
                      <svg width="23" height="20" viewBox="-6 -1 23 20" aria-hidden="true"><Reel fill="#f3cf7e" /></svg>
                      (+) Сборка (Тел-0, Сборочны
                    </Node>
                    <Node $gap={0}>
                      <Branch />
                      <svg width="24" height="16" viewBox="-1 0 24 16" aria-hidden="true"><path d="M4.500 4.500l2-3h8v8l-2 3h-8z" fill="#8fdcf4" stroke="#1a2a90" /><path d="M6.500 2v8h8M0 15l6-5" fill="none" stroke="#803090" /></svg>
                      Системы координат
                    </Node>
                    <Node $gap={0}>
                      <Branch />
                      <svg width="24" height="16" viewBox="-1 0 24 16" aria-hidden="true"><path d="M4.500 3v10h4M4.500 7.500h4" fill="none" stroke="#111" /><path d="M1 1h5v4H1zM8 5h5v4H8zM8 11h4v4H8z" fill="#1e6ce8" stroke={navy} strokeWidth=".6" /></svg>
                      (ф) Компоненты
                    </Node>
                    <Node $gap={0}>
                      <Branch last />
                      <svg width="32" height="18" viewBox="0 0 32 18" aria-hidden="true"><path d="M0 5l7 8M7 5l-7 8" stroke="#111" strokeWidth="2.200" /><path d="M12 12l8-9c3-1 6 1 5 4l-8 9c-3 2-7 0-6-3l8-8c2-1 4 0 3 3l-7 7" fill="none" stroke="#444" /></svg>
                      Сопряжения
                    </Node>
                  </Tree>
                  <HScroll>
                    <button aria-label="Влево"><svg width="6" height="9"><path d="M5 1L1.500 4.500 5 8" fill="none" stroke="#444" strokeWidth="1.800" /></svg></button>
                    <span />
                    <button aria-label="Вправо"><svg width="6" height="9"><path d="M1 1l3.500 3.500L1 8" fill="none" stroke="#444" strokeWidth="1.800" /></svg></button>
                  </HScroll>
                </TreeBox>
              </TreeFrame>
              <Tabs>
                <Tab $on>Построение</Tab>
                <Tab>Исполнения</Tab>
                <Tab>Зоны</Tab>
              </Tabs>
            </TreePane>
            <Viewport><Model /></Viewport>
          </DocBody>
        </DocWindow>
      </Desktop>
    </Main>

    <Dock><MessageBox><div /></MessageBox></Dock>
    <Status>
      Щелкните левой кнопкой мыши на объекте для его выделения (вместе с Ctrl - добавить к выделенным)
      <StatusMark />
    </Status>
  </App_>
);

export default App;
